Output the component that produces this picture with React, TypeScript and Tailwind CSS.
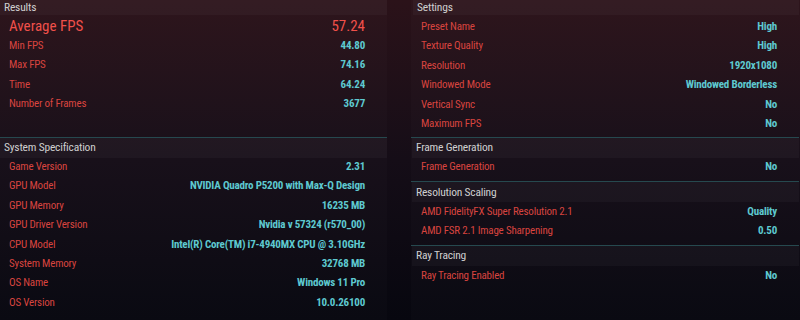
import React from 'react';

type Row = [string, string];

const results: Row[] = [
  ['Min FPS', '44.80'],
  ['Max FPS', '74.16'],
  ['Time', '64.24'],
  ['Number of Frames', '3677'],
];

const system: Row[] = [
  ['Game Version', '2.31'],
  ['GPU Model', 'NVIDIA Quadro P5200 with Max-Q Design'],
  ['GPU Memory', '16235 MB'],
  ['GPU Driver Version', 'Nvidia v 57324 (r570_00)'],
  ['CPU Model', 'Intel(R) Core(TM) i7-4940MX CPU @ 3.10GHz'],
  ['System Memory', '32768 MB'],
  ['OS Name', 'Windows 11 Pro'],
  ['OS Version', '10.0.26100'],
];

const settings: Row[] = [
  ['Preset Name', 'High'],
  ['Texture Quality', 'High'],
  ['Resolution', '1920x1080'],
  ['Windowed Mode', 'Windowed Borderless'],
  ['Vertical Sync', 'No'],
  ['Maximum FPS', 'No'],
];

function Header({ title, top }: { title: string; top?: boolean }) {
  return (
    <div
      className={`flex items-center pl-[4px] bg-white/[0.03] text-[11.5px] leading-none tracking-[-0.2px] text-[#cfcfcf] ${
        top ? 'h-[15px]' : 'h-[20px]'
      }`}
    >
      {title}
    </div>
  );
}

function Item({ label, value }: { label: string; value: string }) {
  return (
    <div className="flex h-[19.4px] items-center justify-between pl-[9px] pr-[22px]">
      <span className="text-[11px] tracking-[-0.2px] text-[#d8443f]">{label}</span>
      <span className="text-[11px] font-bold tracking-[-0.2px] text-[#5ec9d0]">{value}</span>
    </div>
  );
}

function Line() {
  return <div className="h-px bg-[#26494f]" />;
}

export default function App() {
  return (
    <div className="grid h-[320px] w-[800px] grid-cols-[387px_389px] gap-x-[24px] overflow-hidden bg-gradient-to-b from-[#2b1219] via-[#150d17] to-[#07070f] font-['Roboto_Condensed','DejaVu_Sans_Condensed',sans-serif]">
      {/* left column */}
      <div className="flex flex-col bg-white/[0.015]">
        <div className="h-[137px]">
          <Header title="Results" top />
          <div className="flex h-[21.5px] items-center justify-between pl-[9px] pr-[22px] text-[15px] text-[#f0504a]">
            <span>Average FPS</span>
            <span>57.24</span>
          </div>
          {results.map(([l, v]) => (
            <Item key={l} label={l} value={v} />
          ))}
        </div>
        <Line />
        <div className="h-[19.5px]">
          <Header title="System Specification" />
        </div>
        {system.map(([l, v]) => (
          <Item key={l} label={l} value={v} />
        ))}
      </div>

      {/* right column */}
      <div className="flex flex-col bg-white/[0.015] pr-px">
        <div className="h-[137px] pl-[1px]">
          <div className="h-[17.5px] pl-[1px]">
            <Header title="Settings" top />
          </div>
          {settings.map(([l, v]) => (
            <Item key={l} label={l} value={v} />
          ))}
        </div>
        <Line />
        <div className="pb-[4px] pl-[1px]">
          <Header title="Frame Generation" />
          <Item label="Frame Generation" value="No" />
        </div>
        <Line />
        <div className="pb-[4px] pl-[1px]">
          <Header title="Resolution Scaling" />
          <Item label="AMD FidelityFX Super Resolution 2.1" value="Quality" />
          <Item label="AMD FSR 2.1 Image Sharpening" value="0.50" />
        </div>
        <Line />
        <div className="pl-[1px]">
          <Header title="Ray Tracing" />
          <Item label="Ray Tracing Enabled" value="No" />
        </div>
      </div>
    </div>
  );
}
